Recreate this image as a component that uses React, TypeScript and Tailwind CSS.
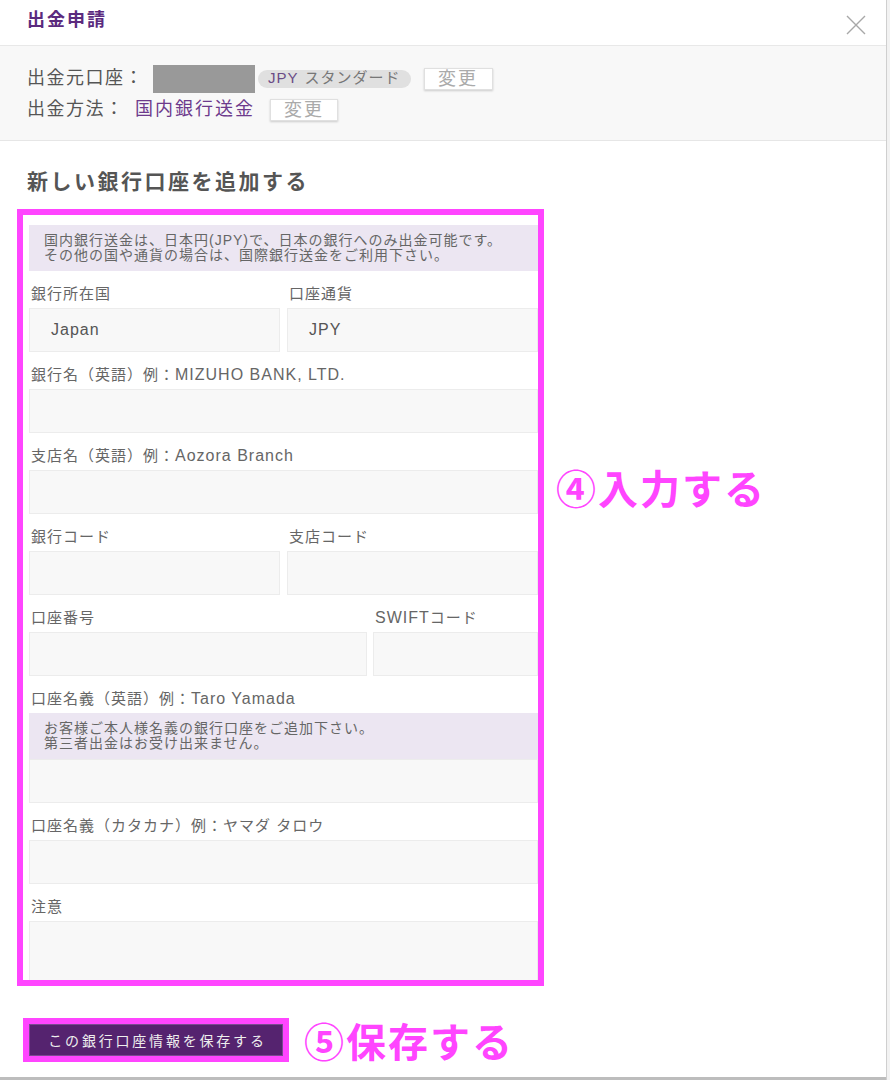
import React from 'react';

const labelCls = "pt-[13px] pb-[4px] pl-[2px] leading-[20px] text-[15px] tracking-[1px] text-[#666]";
const inputCls = "h-[44px] bg-[#f8f8f8] border border-[#ececec]";

// latin runs are set a little larger, like the wide system latin in the screenshot
const L: React.FC<{ children: React.ReactNode }> = ({ children }) => (
    <span className="text-[16px] tracking-[1px]">{children}</span>
);

const Field: React.FC<{ label: React.ReactNode; value?: string; className?: string }> = ({ label, value, className }) => (
    <div className={className}>
        <div className={labelCls}>{label}</div>
        <div className={`${inputCls} flex items-center pl-[21px] text-[16px] tracking-[1px] text-[#555]`}>{value}</div>
    </div>
);

const InfoBox: React.FC<{ lines: string[] }> = ({ lines }) => (
    <div className="h-[46px] bg-[#ece6f2] pl-[15px] flex flex-col justify-center text-[14px] leading-[15px] tracking-[1px] text-[#666]">
        {lines.map(l => <div key={l}>{l}</div>)}
    </div>
);

const ChangeButton: React.FC<{ className?: string }> = ({ className }) => (
    <button className={`h-[22px] bg-white border border-[#e0e0e0] shadow-[0_1px_2px_rgba(0,0,0,0.18)] text-[18px] leading-[20px] tracking-[2px] text-[#aaa] ${className ?? ''}`}>
        変更
    </button>
);

const App: React.FC = () => {
    return (
        <div className="flex w-[890px] h-[1080px] bg-white overflow-hidden font-['Liberation_Sans','Noto_Sans_CJK_JP',sans-serif]">
            <div className="w-[887px] border-r border-[#cfcfcf] flex flex-col">
                {/* header */}
                <div className="h-[46px] shrink-0 border-b border-[#e8e8e8] flex items-start justify-between pl-[27px] pr-[20px]">
                    <h1 className="mt-[5px] leading-[27px] text-[18px] font-bold tracking-[2px] text-[#5b2a7e] font-['Noto_Sans_CJK_JP',sans-serif]">出金申請</h1>
                    <svg width="20" height="20" viewBox="0 0 20 20" className="mt-[15px]">
                        <path d="M1 1L19 19M19 1L1 19" stroke="#a8a8a8" strokeWidth="1.4" fill="none" />
                    </svg>
                </div>

                {/* source account / method */}
                <div className="h-[95px] shrink-0 bg-[#f8f8f8] border-b border-[#e6e6e6] pl-[27px] pt-[17px] flex flex-col">
                    <div className="h-[31px] flex items-center">
                        <span className="w-[126px] text-[18px] tracking-[1.5px] text-[#555]">出金元口座：</span>
                        <div className="w-[102px] h-[28px] bg-[#999]" />
                        <span className="ml-[3px] h-[18px] px-[10px] rounded-full bg-[#e0e0e0] flex items-center text-[15px] tracking-[1px]">
                            <span className="text-[#6b4c86]">JPY</span>
                            <span className="ml-[6px] text-[#777]">スタンダード</span>
                        </span>
                        <ChangeButton className="ml-[13px] w-[69px]" />
                    </div>
                    <div className="h-[31px] flex items-center">
                        <span className="w-[108px] text-[18px] tracking-[1.5px] text-[#555]">出金方法：</span>
                        <span className="w-[120px] text-[18px] tracking-[2px] text-[#6d3a8c]">国内銀行送金</span>
                        <ChangeButton className="ml-[15px] w-[68px]" />
                    </div>
                </div>

                <h2 className="mt-[24px] ml-[27px] h-[30px] leading-[30px] text-[21px] font-bold tracking-[2.5px] text-[#555] font-['Noto_Sans_CJK_JP',sans-serif]">
                    新しい銀行口座を追加する
                </h2>

                <div className="mt-[14px] flex items-start">
                    {/* form (highlighted) */}
                    <div className="ml-[17px] w-[527px] border-[6px] border-[#ff45ff] pt-[10px] pl-[6px]">
                        <InfoBox lines={['国内銀行送金は、日本円(JPY)で、日本の銀行へのみ出金可能です。', 'その他の国や通貨の場合は、国際銀行送金をご利用下さい。']} />
                        <div className="grid grid-cols-2 gap-x-[7px]">
                            <Field label="銀行所在国" value="Japan" />
                            <Field label="口座通貨" value="JPY" />
                        </div>
                        <Field label={<>銀行名（英語）例：<L>MIZUHO BANK, LTD.</L></>} />
                        <Field label={<>支店名（英語）例：<L>Aozora Branch</L></>} />
                        <div className="grid grid-cols-2 gap-x-[7px]">
                            <Field label="銀行コード" />
                            <Field label="支店コード" />
                        </div>
                        <div className="grid grid-cols-[338px_1fr] gap-x-[6px]">
                            <Field label="口座番号" />
                            <Field label={<><L>SWIFT</L>コード</>} />
                        </div>
                        <div className={labelCls}>口座名義（英語）例：<L>Taro Yamada</L></div>
                        <InfoBox lines={['お客様ご本人様名義の銀行口座をご追加下さい。', '第三者出金はお受け出来ません。']} />
                        <div className={inputCls} />
                        <Field label="口座名義（カタカナ）例：ヤマダ タロウ" />
                        <div className={labelCls}>注意</div>
                        <div className="h-[59px] bg-[#f8f8f8] border-t border-x border-[#ececec]" />
                    </div>

                    <div className="ml-[12px] mt-[254px] h-[48px] leading-[48px] text-[40px] font-bold tracking-[2px] text-[#ff45ff] font-['Noto_Sans_CJK_JP',sans-serif]">
                        ④入力する
                    </div>
                </div>

                {/* save */}
                <div className="mt-[30px] flex items-center">
                    <div className="ml-[23px] border-[6px] border-[#ff45ff]">
                        <button className="w-[254px] h-[32px] pl-[3px] bg-[#55236f] border border-[#7a4a92] text-[14px] tracking-[2.8px] text-[#eee] font-['Noto_Sans_CJK_JP',sans-serif]">
                            この銀行口座情報を保存する
                        </button>
                    </div>
                    <div className="ml-[15px] h-[48px] leading-[48px] text-[40px] font-bold tracking-[2px] text-[#ff45ff] font-['Noto_Sans_CJK_JP',sans-serif]">
                        ⑤保存する
                    </div>
                </div>

                <div className="mt-auto h-[3px] bg-[#bdbdbd]" />
            </div>
            <div className="flex-1 bg-[#f2f2f2]" />
        </div>
    );
};

export default App;
